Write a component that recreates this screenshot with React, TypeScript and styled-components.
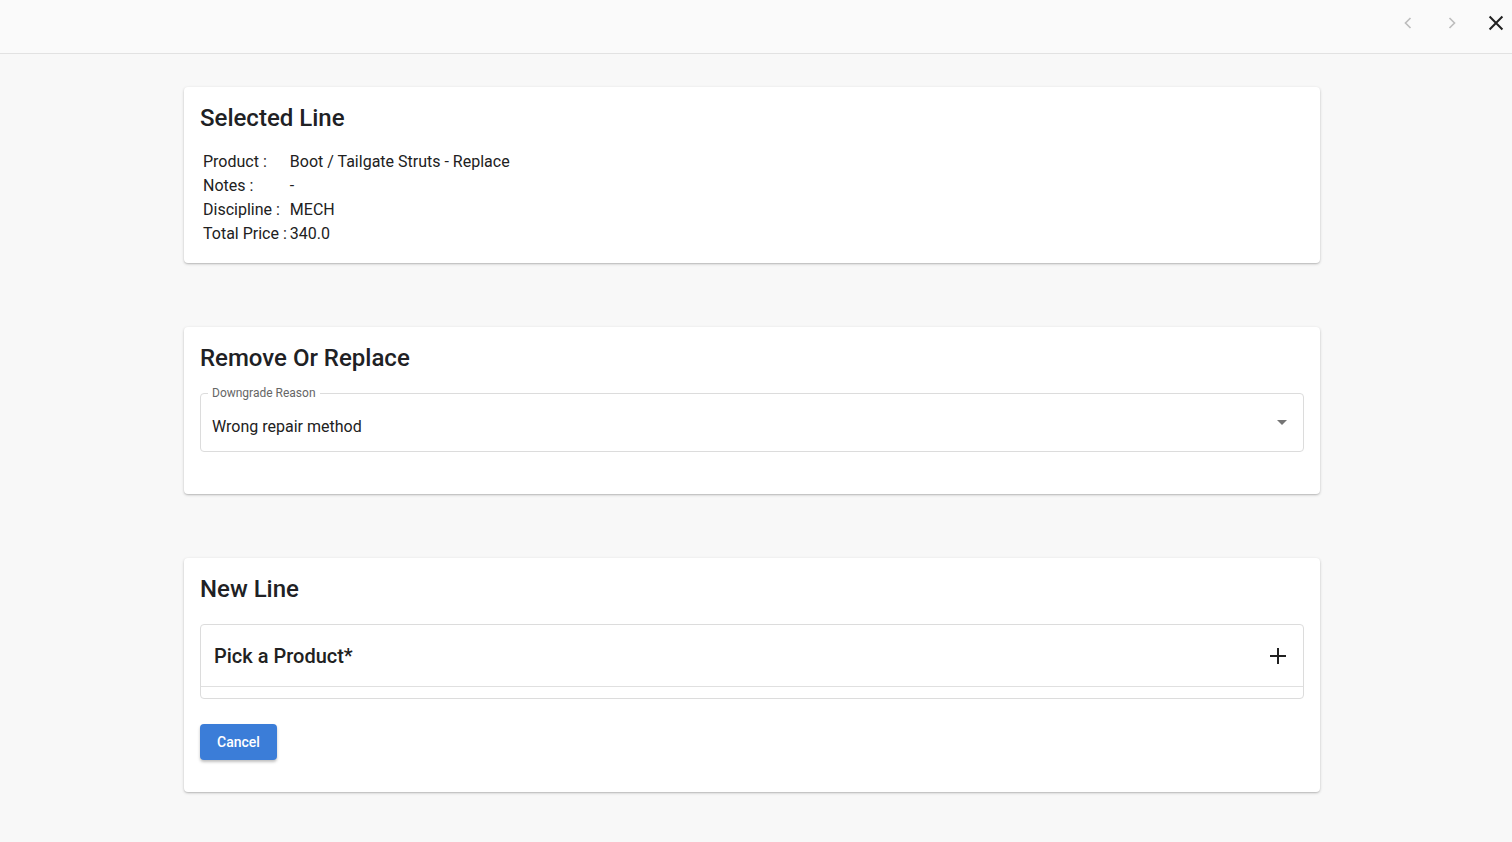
import React, { FC } from 'react';
import styled, { createGlobalStyle } from 'styled-components';

const GlobalStyle = createGlobalStyle`
  html, body {
    margin: 0;
    padding: 0;
    background: #f8f8f8;
    font-family: Roboto, "Noto Sans", Arial, sans-serif;
    color: #212121;
  }
`;

const Page = styled.div`
  min-height: 842px;
  background: #f8f8f8;
`;

const TopBar = styled.div`
  height: 54px;
  border-bottom: 1px solid #e2e2e2;
  background: #fafafa;
  display: flex;
  align-items: center;
  justify-content: flex-end;
  gap: 12px;
  box-sizing: border-box;
`;

const IconButton = styled.button<{ $dim?: boolean }>`
  width: 32px;
  height: 44px;
  border: 0;
  background: transparent;
  display: flex;
  align-items: center;
  justify-content: center;
  padding: 0;
  margin-top: -8px;
  color: ${({ $dim }) => ($dim ? '#bdbdbd' : '#212121')};
  cursor: pointer;
`;

const Content = styled.div`
  width: 1136px;
  margin-left: 184px;
  padding-top: 33px;
  display: flex;
  flex-direction: column;
  gap: 64px;
`;

const Card = styled.section`
  background: #fff;
  border-radius: 4px;
  box-shadow: 0 1px 3px rgba(0, 0, 0, 0.22), 0 1px 1px rgba(0, 0, 0, 0.08);
  padding: 14px 16px 20px;
  display: flex;
  flex-direction: column;
`;

const CardTitle = styled.h2`
  margin: 0 0 12px;
  font-size: 24px;
  font-weight: 500;
  line-height: 34px;
  color: #202124;
`;

const DetailTable = styled.table`
  border-collapse: collapse;
  font-size: 16px;
  line-height: 24px;
  margin: 3px 0 -3px 3px;
  align-self: flex-start;

  td {
    padding: 0;
    vertical-align: top;
    white-space: nowrap;
  }
  td:first-child {
    padding-right: 3px;
  }
`;

const Outlined = styled.fieldset`
  margin: 0;
  border: 1px solid #dcdcdc;
  border-radius: 4px;
  padding: 0 11px;
  min-width: 0;

  legend {
    font-size: 12px;
    color: #666;
    padding: 0 4px;
    margin-left: -4px;
    line-height: 12px;
  }
`;

const SelectRow = styled.div`
  height: 52px;
  display: flex;
  align-items: center;
  justify-content: space-between;
`;

const SelectValue = styled.span`
  font-size: 16px;
  color: #212121;
  margin-top: 2px;
`;

const Caret = styled.span`
  width: 0;
  height: 0;
  border-left: 5px solid transparent;
  border-right: 5px solid transparent;
  border-top: 5px solid #757575;
  margin-right: 5px;
  margin-top: -6px;
`;

const FieldSpacer = styled.div`
  height: 22px;
`;

const Panel = styled.div`
  border: 1px solid #dcdcdc;
  border-radius: 4px;
  padding-bottom: 11px;
  margin-top: 6px;
`;

const PanelHeader = styled.div`
  height: 61px;
  border-bottom: 1px solid #e0e0e0;
  display: flex;
  align-items: center;
  justify-content: space-between;
  padding: 0 16px 0 13px;
  font-size: 20px;
  font-weight: 500;
  color: #212121;
`;

const Actions = styled.div`
  margin-top: 25px;
  margin-bottom: 12px;
`;

const Button = styled.button`
  background: #3b7dd8;
  color: #fff;
  border: 0;
  border-radius: 4px;
  height: 36px;
  padding: 0 17px;
  font-family: inherit;
  font-size: 14px;
  font-weight: 500;
  box-shadow: 0 2px 3px rgba(0, 0, 0, 0.25);
  cursor: pointer;
`;

const Chevron: FC<{ dir: 'left' | 'right' }> = ({ dir }) => (
  <svg width="20" height="20" viewBox="0 0 24 24" fill="none" stroke="currentColor" strokeWidth="2">
    {dir === 'left' ? <path d="M15 6l-6 6 6 6" /> : <path d="M9 6l6 6-6 6" />}
  </svg>
);

const details: [string, string][] = [
  ['Product :', 'Boot / Tailgate Struts - Replace'],
  ['Notes :', '-'],
  ['Discipline :', 'MECH'],
  ['Total Price :', '340.0'],
];

export default function App() {
  return (
    <Page>
      <GlobalStyle />
      <TopBar>
        <IconButton $dim aria-label="previous"><Chevron dir="left" /></IconButton>
        <IconButton $dim aria-label="next"><Chevron dir="right" /></IconButton>
        <IconButton aria-label="close">
          <svg width="22" height="22" viewBox="0 0 24 24" fill="none" stroke="currentColor" strokeWidth="2.2">
            <path d="M5 5l14 14M19 5L5 19" />
          </svg>
        </IconButton>
      </TopBar>
      <Content>
        <Card>
          <CardTitle>Selected Line</CardTitle>
          <DetailTable>
            <tbody>
              {details.map(([k, v]) => (
                <tr key={k}>
                  <td>{k}</td>
                  <td>{v}</td>
                </tr>
              ))}
            </tbody>
          </DetailTable>
        </Card>
        <Card>
          <CardTitle>Remove Or Replace</CardTitle>
          <Outlined>
            <legend>Downgrade Reason</legend>
            <SelectRow>
              <SelectValue>Wrong repair method</SelectValue>
              <Caret />
            </SelectRow>
          </Outlined>
          <FieldSpacer />
        </Card>
        <Card>
          <CardTitle>New Line</CardTitle>
          <Panel>
            <PanelHeader>
              <span>Pick a Product*</span>
              <svg width="18" height="18" viewBox="0 0 18 18" stroke="#212121" strokeWidth="2">
                <path d="M9 1v16M1 9h16" />
              </svg>
            </PanelHeader>
          </Panel>
          <Actions>
            <Button>Cancel</Button>
          </Actions>
        </Card>
      </Content>
    </Page>
  );
}
